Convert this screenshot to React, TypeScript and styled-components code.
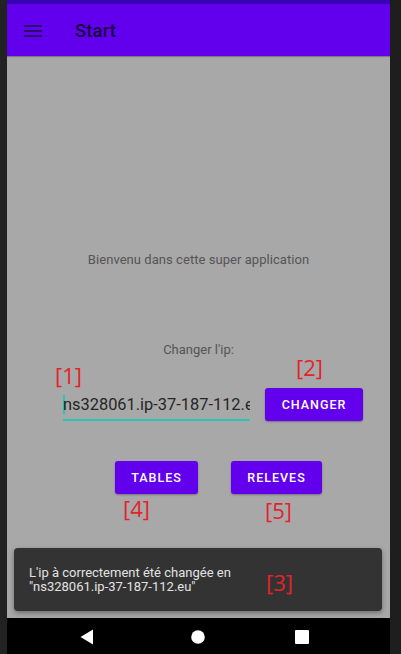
import React from "react";
import styled, { createGlobalStyle } from "styled-components";

const Global = createGlobalStyle`
  html, body { margin: 0; padding: 0; background: #1e1e1e; }
  body { font-family: Roboto, "Noto Sans", Arial, sans-serif; }
`;

const Frame = styled.div`
  width: 401px;
  height: 654px;
  display: flex;
  background: #1e1e1e;
  overflow: hidden;
`;

const Bezel = styled.div<{ $w: number; $c: string }>`
  width: ${(p) => p.$w}px;
  flex: none;
  background: ${(p) => p.$c};
`;

const Screen = styled.div`
  width: 383px;
  flex: none;
  display: flex;
  flex-direction: column;
`;

const StatusBar = styled.div`
  height: 4px;
  background: #3a00b4;
`;

const Toolbar = styled.div`
  height: 52px;
  display: flex;
  align-items: center;
  background: #6200ee;
  position: relative;
  z-index: 1;
  box-shadow: 0 1px 1px rgba(0, 0, 0, 0.25);
`;

const MenuIcon = styled.svg`
  width: 18px;
  height: 12px;
  margin-left: 17px;
  margin-top: 1px;
`;

const Title = styled.div`
  margin-left: 33px;
  margin-top: 2px;
  font-size: 18.5px;
  font-weight: 500;
  color: rgba(0, 0, 0, 0.75);
  letter-spacing: 0.1px;
`;

const Content = styled.div`
  flex: 1;
  position: relative;
  background: #a8a8a8;
  display: flex;
  flex-direction: column;
  align-items: center;
  padding-top: 196px;
`;

const Welcome = styled.div`
  font-size: 13px;
  line-height: 16px;
  color: #555;
  letter-spacing: 0.05px;
`;

const Caption = styled.div`
  margin-top: 74px;
  font-size: 13px;
  line-height: 16px;
  color: #555;
`;

const IpRow = styled.div`
  align-self: stretch;
  margin-top: 30px;
  display: flex;
  align-items: center;
  padding-left: 56px;
  gap: 15px;
`;

const IpField = styled.div`
  width: 187px;
  height: 33px;
  position: relative;
  overflow: hidden;
  border-bottom: 2px solid #2ac4b6;
  box-sizing: border-box;
  display: flex;
  align-items: center;
  font-size: 16.4px;
  color: #262626;
  white-space: nowrap;
  padding-top: 2px;
`;

const Caret = styled.span`
  display: inline-block;
  width: 1.5px;
  height: 19px;
  background: #2ac4b6;
  margin-right: -1.5px;
  flex: none;
`;

const Button = styled.div<{ $w: number }>`
  width: ${(p) => p.$w}px;
  height: 33px;
  flex: none;
  border-radius: 3px;
  background: #6200ee;
  color: #fff;
  font-size: 12.5px;
  font-weight: 500;
  letter-spacing: 1px;
  display: flex;
  align-items: center;
  justify-content: center;
  box-shadow: 0 1px 2px rgba(0, 0, 0, 0.3);
`;

const ButtonRow = styled.div`
  align-self: stretch;
  margin-top: 40px;
  display: flex;
  padding-left: 108px;
  gap: 33px;
`;

const Snackbar = styled.div`
  position: absolute;
  left: 7px;
  right: 8px;
  bottom: 7px;
  height: 63px;
  border-radius: 4px;
  background: #333333;
  box-shadow: 0 2px 5px rgba(0, 0, 0, 0.35);
  display: flex;
  align-items: center;
  padding-left: 15px;
  box-sizing: border-box;
  color: #e2e2e2;
  font-size: 13px;
  line-height: 14px;
`;

const Tag = styled.div<{ $x: number; $y: number }>`
  position: absolute;
  left: ${(p) => p.$x}px;
  top: ${(p) => p.$y}px;
  font-family: "Open Sans", "Noto Sans", sans-serif;
  font-size: 22px;
  line-height: 24px;
  color: #e3232b;
  z-index: 2;
`;

const NavBar = styled.div`
  height: 36px;
  background: #000;
  display: flex;
  align-items: center;
  padding-top: 2px;
  box-sizing: border-box;
`;

const NavIcon = styled.svg<{ $ml: number }>`
  margin-left: ${(p) => p.$ml}px;
  flex: none;
`;

export default function App() {
  return (
    <>
      <Global />
      <Frame>
        <Bezel $w={7} $c="#222222" />
        <Screen>
          <StatusBar />
          <Toolbar>
            <MenuIcon viewBox="0 0 18 12">
              <rect x="0" y="0" width="18" height="2" fill="#2c0c6c" />
              <rect x="0" y="5" width="18" height="2" fill="#2c0c6c" />
              <rect x="0" y="10" width="18" height="2" fill="#2c0c6c" />
            </MenuIcon>
            <Title>Start</Title>
          </Toolbar>
          <Content>
            <Welcome>Bienvenu dans cette super application</Welcome>
            <Caption>Changer l'ip:</Caption>
            <IpRow>
              <IpField>
                <Caret />
                ns328061.ip-37-187-112.eu
              </IpField>
              <Button $w={98}>CHANGER</Button>
            </IpRow>
            <ButtonRow>
              <Button $w={83}>TABLES</Button>
              <Button $w={91}>RELEVES</Button>
            </ButtonRow>
            <Snackbar>
              L'ip à correctement été changée en
              <br />
              "ns328061.ip-37-187-112.eu"
            </Snackbar>
            <Tag $x={48} $y={307}>[1]</Tag>
            <Tag $x={289} $y={299}>[2]</Tag>
            <Tag $x={116} $y={440}>[4]</Tag>
            <Tag $x={258} $y={442}>[5]</Tag>
            <Tag $x={259} $y={514}>[3]</Tag>
          </Content>
          <NavBar>
            <NavIcon $ml={73} width="14" height="16" viewBox="0 0 14 16">
              <path d="M13 0.5 L13 15.5 L0.5 8 Z" fill="#fff" />
            </NavIcon>
            <NavIcon $ml={97} width="14" height="14" viewBox="0 0 14 14">
              <circle cx="7" cy="7" r="6.8" fill="#fff" />
            </NavIcon>
            <NavIcon $ml={90} width="14" height="14" viewBox="0 0 14 14">
              <rect x="0" y="0" width="14" height="14" rx="1" fill="#fff" />
            </NavIcon>
          </NavBar>
        </Screen>
        <Bezel $w={11} $c="#1e1e1e" />
      </Frame>
    </>
  );
}
